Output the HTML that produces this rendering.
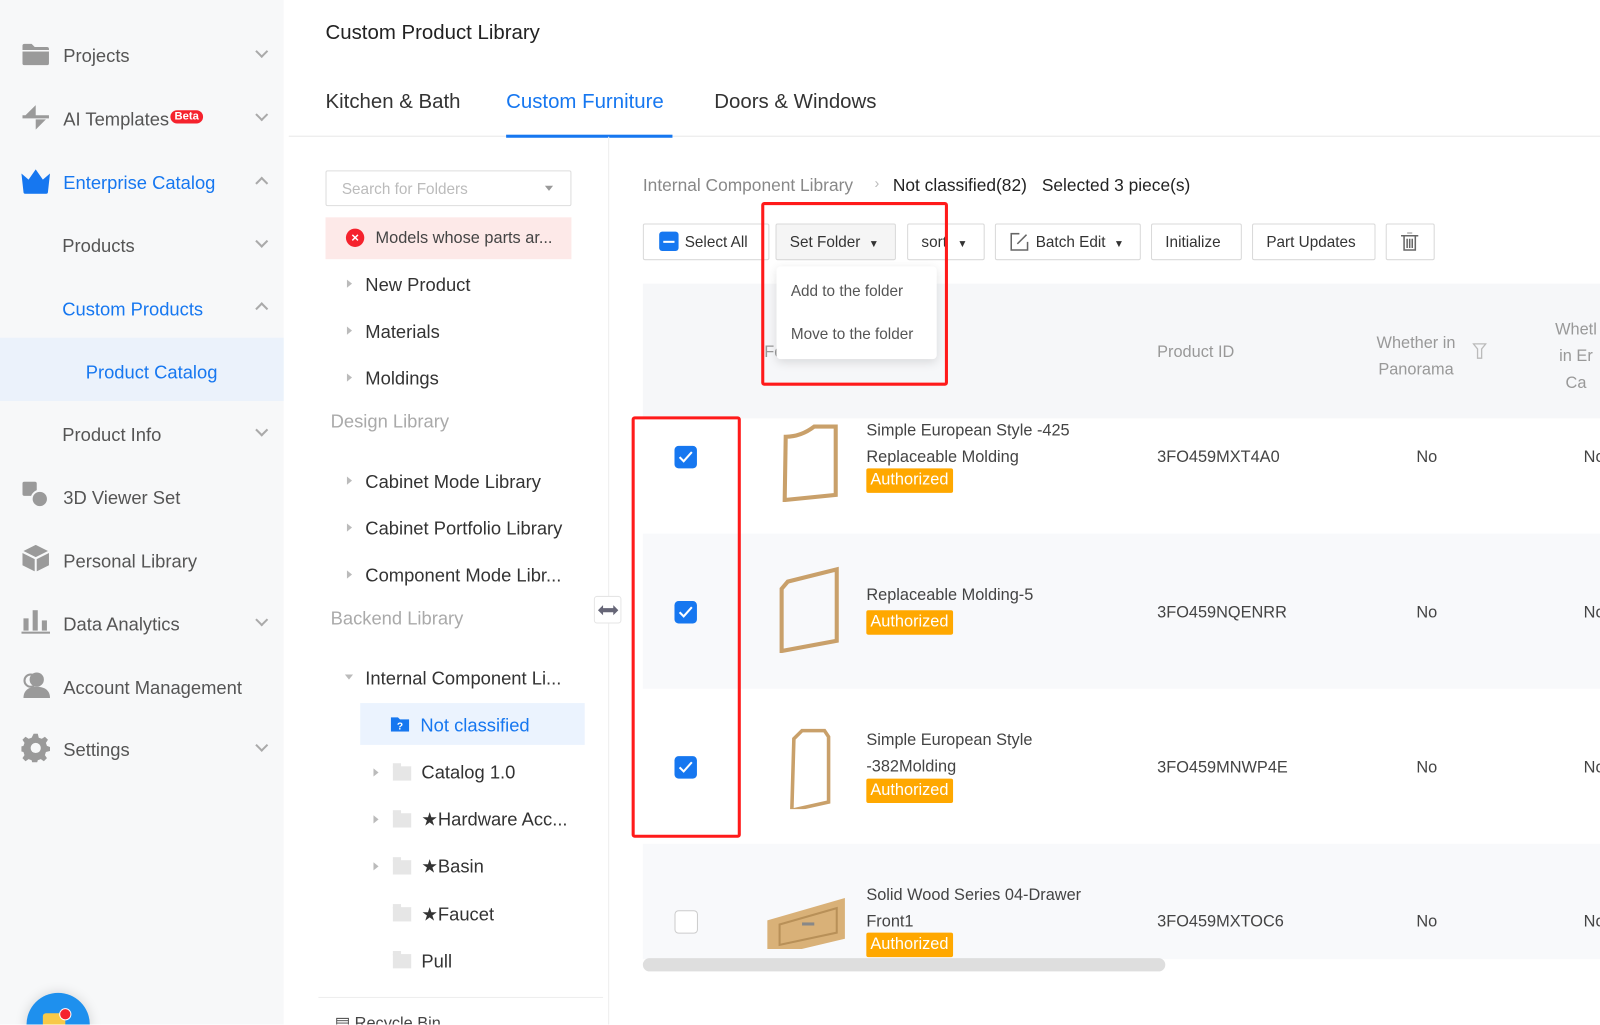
<!DOCTYPE html>
<html><head><meta charset="utf-8">
<style>
*{box-sizing:border-box;margin:0;padding:0}
html,body{width:1600px;height:1024px;overflow:hidden;background:#fff}
body{font-family:"Liberation Sans",sans-serif;color:#333}
#w{position:absolute;left:0;top:0;width:1568px;height:1004px;transform:scale(1.020408);transform-origin:0 0;overflow:hidden;background:#fff}
.a{position:absolute;white-space:nowrap}
.side{left:0;top:0;width:278px;height:1004px;background:#f7f8f9}
.si{font-size:18px;color:#555;margin-top:2px}
.blue{color:#1677f0}
.chev{position:absolute;width:9px;height:9px;border-right:2px solid #aaa;border-bottom:2px solid #aaa;transform:rotate(45deg)}
.chev.up{transform:rotate(-135deg)}
.tree{font-size:18px;color:#333;margin-top:1px}
.tri{position:absolute;width:0;height:0;border-top:4px solid transparent;border-bottom:4px solid transparent;border-left:5px solid #bbb}
.trid{position:absolute;width:0;height:0;border-left:4px solid transparent;border-right:4px solid transparent;border-top:5px solid #bbb}
.fold{position:absolute;width:18px;height:14px;background:#e6e6e6}
.fold:before{content:"";position:absolute;left:0;top:-3px;width:8px;height:4px;background:#e6e6e6}
.btn{position:absolute;top:219px;height:36px;border:1px solid #d9d9d9;border-radius:2px;background:#fff;font-size:15px;color:#333;line-height:36px;padding:0 13px}
.cb{position:absolute;width:22px;height:22px;border-radius:4px;background:#1677f0}
.cb svg{position:absolute;left:4px;top:5px}
.tag{position:absolute;background:#ffa800;color:#fff;font-size:16px;height:24px;line-height:24px;padding:0 4px;border-radius:2px}
.td{font-size:16px;color:#444;margin-top:2px}
.hd{margin-top:2px}
.red{position:absolute;border:3px solid #ff1a1a;border-radius:3px}
</style></head><body><div id="w">

<div class="a side"></div>
<svg class="a" style="left:22px;top:42px" width="26" height="22" viewBox="0 0 26 22"><path d="M0 3a2 2 0 0 1 2-2h7l3 3h12a2 2 0 0 1 2 2v14a2 2 0 0 1-2 2H2a2 2 0 0 1-2-2z" fill="#9a9a9a"/><rect x="0" y="7" width="26" height="1.5" fill="#f7f8f9"/></svg>
<div class="a si" style="left:62px;top:43px">Projects</div><div class="chev" style="left:252px;top:46px"></div>

<svg class="a" style="left:22px;top:103px" width="26" height="24" viewBox="0 0 26 24"><path d="M13 0v10H3z M0 10h26v3H0z M13 24V14h10z" fill="#9a9a9a"/></svg>
<div class="a si" style="left:62px;top:105px">AI Templates</div>
<div class="a" style="left:167px;top:108px;background:#f5222d;color:#fff;font-size:11px;border-radius:8px;padding:0 4px;line-height:13px;font-weight:bold">Beta</div>
<div class="chev" style="left:252px;top:108px"></div>

<svg class="a" style="left:21px;top:166px" width="28" height="24" viewBox="0 0 28 24"><path d="M0 4l7 6 7-10 7 10 7-6-2 18a2 2 0 0 1-2 2H4a2 2 0 0 1-2-2z" fill="#1677f0"/></svg>
<div class="a si blue" style="left:62px;top:167px">Enterprise Catalog</div><div class="chev up" style="left:252px;top:175px"></div>

<div class="a si" style="left:61px;top:229px">Products</div><div class="chev" style="left:252px;top:232px"></div>
<div class="a si blue" style="left:61px;top:291px">Custom Products</div><div class="chev up" style="left:252px;top:298px"></div>
<div class="a" style="left:0;top:331px;width:278px;height:62px;background:#ebf2fb"></div>
<div class="a si blue" style="left:84px;top:353px">Product Catalog</div>
<div class="a si" style="left:61px;top:414px">Product Info</div><div class="chev" style="left:252px;top:417px"></div>

<svg class="a" style="left:22px;top:472px" width="26" height="26" viewBox="0 0 26 26"><rect x="0" y="0" width="14" height="14" rx="2" fill="#9a9a9a"/><circle cx="17" cy="17" r="8" fill="#9a9a9a" stroke="#f7f8f9" stroke-width="2"/></svg>
<div class="a si" style="left:62px;top:476px">3D Viewer Set</div>
<svg class="a" style="left:22px;top:534px" width="26" height="26" viewBox="0 0 26 26"><path d="M13 0l12 6-12 6L1 6z" fill="#9a9a9a"/><path d="M0 8l12 6v12L0 20z M26 8l-12 6v12l12-6z" fill="#9a9a9a"/></svg>
<div class="a si" style="left:62px;top:538px">Personal Library</div>
<svg class="a" style="left:21px;top:596px" width="28" height="26" viewBox="0 0 28 26"><rect x="2" y="10" width="5" height="12" fill="#9a9a9a"/><rect x="11" y="2" width="5" height="20" fill="#9a9a9a"/><rect x="20" y="12" width="5" height="10" fill="#9a9a9a"/><rect x="0" y="23" width="28" height="2" fill="#9a9a9a"/></svg>
<div class="a si" style="left:62px;top:600px">Data Analytics</div><div class="chev" style="left:252px;top:603px"></div>
<svg class="a" style="left:21px;top:658px" width="28" height="26" viewBox="0 0 28 26"><circle cx="15" cy="8" r="7" fill="#9a9a9a"/><path d="M2 26c0-8 6-11 13-11s13 3 13 11z" fill="#9a9a9a"/><circle cx="9" cy="9" r="6" fill="none" stroke="#9a9a9a" stroke-width="2"/></svg>
<div class="a si" style="left:62px;top:662px">Account Management</div>
<svg class="a" style="left:21px;top:719px" width="28" height="28" viewBox="0 0 28 28"><path d="M12 0h4l1 4 3 1 3-2 3 3-2 3 1 3 3 1v4l-4 1-1 3 2 3-3 3-3-2-3 1-1 4h-4l-1-4-3-1-3 2-3-3 2-3-1-3-4-1v-4l4-1 1-3-2-3 3-3 3 2 3-1z" fill="#9a9a9a"/><circle cx="14" cy="14" r="5" fill="#f7f8f9"/></svg>
<div class="a si" style="left:62px;top:723px">Settings</div><div class="chev" style="left:252px;top:726px"></div>

<div class="a" style="left:26px;top:973px;width:62px;height:62px;border-radius:50%;background:#1e90ee;box-shadow:0 0 12px rgba(0,0,0,.15)"></div>
<div class="a" style="left:42px;top:993px;width:22px;height:14px;background:#f7c948;border-radius:3px"></div>
<div class="a" style="left:58px;top:988px;width:12px;height:12px;background:#f5222d;border-radius:50%;border:1px solid #fff"></div>

<div class="a hd" style="left:319px;top:19px;font-size:20px;color:#222">Custom Product Library</div>
<div class="a hd" style="left:319px;top:87px;font-size:20px;color:#333">Kitchen &amp; Bath</div>
<div class="a hd" style="left:496px;top:87px;font-size:20px;color:#1677f0">Custom Furniture</div>
<div class="a hd" style="left:700px;top:87px;font-size:20px;color:#333">Doors &amp; Windows</div>
<div class="a" style="left:283px;top:133px;width:1285px;height:1px;background:#e8e8e8"></div>
<div class="a" style="left:496px;top:132px;width:163px;height:3px;background:#1677f0"></div>

<div class="a" style="left:596px;top:134px;width:1px;height:870px;background:#eee"></div>
<div class="a" style="left:319px;top:167px;width:241px;height:35px;border:1px solid #ddd;border-radius:2px"></div>
<div class="a" style="left:335px;top:177px;font-size:15px;color:#bbb">Search for Folders</div>
<div class="trid" style="left:534px;top:182px;border-top-color:#999"></div>
<div class="a" style="left:319px;top:213px;width:241px;height:41px;background:#fde9e8"></div>
<div class="a" style="left:339px;top:224px;width:18px;height:18px;border-radius:50%;background:#f5222d;color:#fff;font-size:13px;line-height:18px;text-align:center;font-weight:bold">×</div>
<div class="a" style="left:368px;top:225px;font-size:16px;color:#444">Models whose parts ar...</div>

<div class="tri" style="left:340px;top:274px"></div><div class="a tree" style="left:358px;top:268px">New Product</div>
<div class="tri" style="left:340px;top:320px"></div><div class="a tree" style="left:358px;top:314px">Materials</div>
<div class="tri" style="left:340px;top:366px"></div><div class="a tree" style="left:358px;top:360px">Moldings</div>
<div class="a tree" style="left:324px;top:402px;color:#aaa">Design Library</div>
<div class="tri" style="left:340px;top:467px"></div><div class="a tree" style="left:358px;top:461px">Cabinet Mode Library</div>
<div class="tri" style="left:340px;top:513px"></div><div class="a tree" style="left:358px;top:507px">Cabinet Portfolio Library</div>
<div class="tri" style="left:340px;top:559px"></div><div class="a tree" style="left:358px;top:553px">Component Mode Libr...</div>
<div class="a tree" style="left:324px;top:595px;color:#aaa">Backend Library</div>
<div class="trid" style="left:338px;top:661px"></div><div class="a tree" style="left:358px;top:654px">Internal Component Li...</div>
<div class="a" style="left:353px;top:689px;width:220px;height:41px;background:#ebf3fe"></div>
<svg class="a" style="left:383px;top:701px" width="18" height="16" viewBox="0 0 18 16"><path d="M0 2h7l2 2h9v12H0z" fill="#1677f0"/><text x="9" y="14" font-size="10" fill="#fff" text-anchor="middle" font-family="Liberation Sans" font-weight="bold">?</text></svg>
<div class="a tree" style="left:412px;top:700px;color:#1677f0">Not classified</div>
<div class="tri" style="left:366px;top:753px"></div><div class="fold" style="left:385px;top:751px"></div><div class="a tree" style="left:413px;top:746px">Catalog 1.0</div>
<div class="tri" style="left:366px;top:799px"></div><div class="fold" style="left:385px;top:797px"></div><div class="a tree" style="left:413px;top:792px">★Hardware Acc...</div>
<div class="tri" style="left:366px;top:845px"></div><div class="fold" style="left:385px;top:843px"></div><div class="a tree" style="left:413px;top:838px">★Basin</div>
<div class="fold" style="left:385px;top:889px"></div><div class="a tree" style="left:413px;top:885px">★Faucet</div>
<div class="fold" style="left:385px;top:935px"></div><div class="a tree" style="left:413px;top:931px">Pull</div>
<div class="a" style="left:312px;top:977px;width:279px;height:1px;background:#eee"></div>
<div class="a" style="left:328px;top:993px;font-size:16px;color:#444">&#9636; Recycle Bin</div>
<div class="a" style="left:582px;top:584px;width:27px;height:27px;border:1px solid #e5e5e5;background:#fff;border-radius:3px"></div>
<svg class="a" style="left:586px;top:592px" width="20" height="12" viewBox="0 0 20 12"><path d="M0 6l5-5v3h10V1l5 5-5 5V8H5v3z" fill="#667"/></svg>

<div class="a td" style="left:630px;top:170px;font-size:17px;color:#888">Internal Component Library</div>
<div class="a" style="left:857px;top:171px;font-size:14px;color:#bbb">›</div>
<div class="a td" style="left:875px;top:170px;font-size:17px;color:#222">Not classified(82)</div>
<div class="a td" style="left:1021px;top:170px;font-size:17px;color:#222">Selected 3 piece(s)</div>

<div class="btn" style="left:630px;width:124px;padding-left:40px">Select All</div>
<div class="a" style="left:646px;top:227px;width:19px;height:19px;border-radius:3px;background:#1677f0"></div>
<div class="a" style="left:650px;top:236px;width:11px;height:2px;background:#fff"></div>
<div class="btn" style="left:760px;width:118px;background:#f5f5f5">Set Folder <span style="font-size:10px;margin-left:4px">▼</span></div>
<div class="btn" style="left:889px;width:76px">sort <span style="font-size:10px;margin-left:6px">▼</span></div>
<div class="btn" style="left:975px;width:143px;padding-left:39px">Batch Edit <span style="font-size:10px;margin-left:4px">▼</span></div>
<svg class="a" style="left:990px;top:228px" width="18" height="18" viewBox="0 0 18 18"><path d="M9 1H1v16h16V9" fill="none" stroke="#666" stroke-width="1.5"/><path d="M7 11l9-9" stroke="#666" stroke-width="1.5"/></svg>
<div class="btn" style="left:1128px;width:89px">Initialize</div>
<div class="btn" style="left:1227px;width:121px">Part Updates</div>
<div class="btn" style="left:1358px;width:48px"></div>
<svg class="a" style="left:1373px;top:228px" width="17" height="18" viewBox="0 0 17 18"><path d="M0 3h17M6 0h5M3 3v14h11V3M6 6v9M8.5 6v9M11 6v9" fill="none" stroke="#666" stroke-width="1.5"/></svg>

<div class="a" style="left:630px;top:278px;width:938px;height:132px;background:#f6f7f9"></div>
<div class="a td" style="left:749px;top:335px;color:#999">Fo</div>
<div class="a td" style="left:1134px;top:335px;color:#999">Product ID</div>
<div class="a td" style="left:1349px;top:322px;color:#999;text-align:center;line-height:26px">Whether in<br>Panorama</div>
<svg class="a" style="left:1443px;top:336px" width="14" height="16" viewBox="0 0 14 16"><path d="M1 1h12l-4 5v9H5V6z" fill="none" stroke="#bbb" stroke-width="1.3"/></svg>
<div class="a td" style="left:1524px;top:309px;color:#999;line-height:26px;text-align:center">Whetl<br>in Er<br>Ca</div>

<div class="a" style="left:761px;top:261px;width:157px;height:91px;background:#fff;border-radius:4px;box-shadow:0 3px 10px rgba(0,0,0,.12)"></div>
<div class="a" style="left:775px;top:277px;font-size:15px;color:#555">Add to the folder</div>
<div class="a" style="left:775px;top:319px;font-size:15px;color:#555">Move to the folder</div>

<div class="a" style="left:630px;top:523px;width:938px;height:152px;background:#f8f9fb"></div>
<div class="a" style="left:630px;top:827px;width:938px;height:113px;background:#f8f9fb"></div>

<div class="cb" style="left:661px;top:437px"><svg width="14" height="12" viewBox="0 0 14 12"><path d="M1 6l4 4 8-9" fill="none" stroke="#fff" stroke-width="2"/></svg></div>
<div class="cb" style="left:661px;top:589px"><svg width="14" height="12" viewBox="0 0 14 12"><path d="M1 6l4 4 8-9" fill="none" stroke="#fff" stroke-width="2"/></svg></div>
<div class="cb" style="left:661px;top:741px"><svg width="14" height="12" viewBox="0 0 14 12"><path d="M1 6l4 4 8-9" fill="none" stroke="#fff" stroke-width="2"/></svg></div>
<div class="a" style="left:661px;top:892px;width:23px;height:23px;border:1px solid #ccc;border-radius:4px;background:#fff"></div>

<svg class="a" style="left:748px;top:410px" width="90" height="82" viewBox="0 0 90 82"><path d="M22 18q15 0 28-10h21v67l-50 5z" fill="none" stroke="#c9a06a" stroke-width="4"/></svg>
<svg class="a" style="left:748px;top:555px" width="90" height="85" viewBox="0 0 90 85"><path d="M18 22l6-7 48-12v70l-54 10z" fill="none" stroke="#c9a06a" stroke-width="4"/></svg>
<svg class="a" style="left:748px;top:708px" width="90" height="85" viewBox="0 0 90 85"><path d="M30 16l8-8h22l4 6v64l-36 8z" fill="none" stroke="#c9a06a" stroke-width="3.5"/></svg>
<svg class="a" style="left:748px;top:860px" width="90" height="70" viewBox="0 0 90 70"><path d="M4 42l76-22v40L4 78z" fill="#d9b178"/><path d="M16 46l56-16v24l-56 12z" fill="none" stroke="#b89058" stroke-width="2"/><rect x="38" y="44" width="12" height="3" fill="#888"/></svg>

<div class="a td" style="left:849px;top:408px;line-height:26px">Simple European Style -425<br>Replaceable Molding</div>
<div class="tag" style="left:849px;top:459px">Authorized</div>
<div class="a td" style="left:849px;top:573px">Replaceable Molding-5</div>
<div class="tag" style="left:849px;top:598px">Authorized</div>
<div class="a td" style="left:849px;top:711px;line-height:26px">Simple European Style<br>-382Molding</div>
<div class="tag" style="left:849px;top:763px">Authorized</div>
<div class="a td" style="left:849px;top:863px;line-height:26px">Solid Wood Series 04-Drawer<br>Front1</div>
<div class="tag" style="left:849px;top:914px">Authorized</div>

<div class="a td" style="left:1134px;top:438px">3FO459MXT4A0</div>
<div class="a td" style="left:1134px;top:590px">3FO459NQENRR</div>
<div class="a td" style="left:1134px;top:742px">3FO459MNWP4E</div>
<div class="a td" style="left:1134px;top:893px">3FO459MXTOC6</div>
<div class="a td" style="left:1388px;top:438px">No</div>
<div class="a td" style="left:1388px;top:590px">No</div>
<div class="a td" style="left:1388px;top:742px">No</div>
<div class="a td" style="left:1388px;top:893px">No</div>
<div class="a td" style="left:1552px;top:438px">No</div>
<div class="a td" style="left:1552px;top:590px">No</div>
<div class="a td" style="left:1552px;top:742px">No</div>
<div class="a td" style="left:1552px;top:893px">No</div>

<div class="a" style="left:630px;top:939px;width:512px;height:13px;border-radius:7px;background:#dedede"></div>

<div class="red" style="left:746px;top:198px;width:183px;height:180px"></div>
<div class="red" style="left:619px;top:408px;width:107px;height:413px"></div>

</div></body></html>
